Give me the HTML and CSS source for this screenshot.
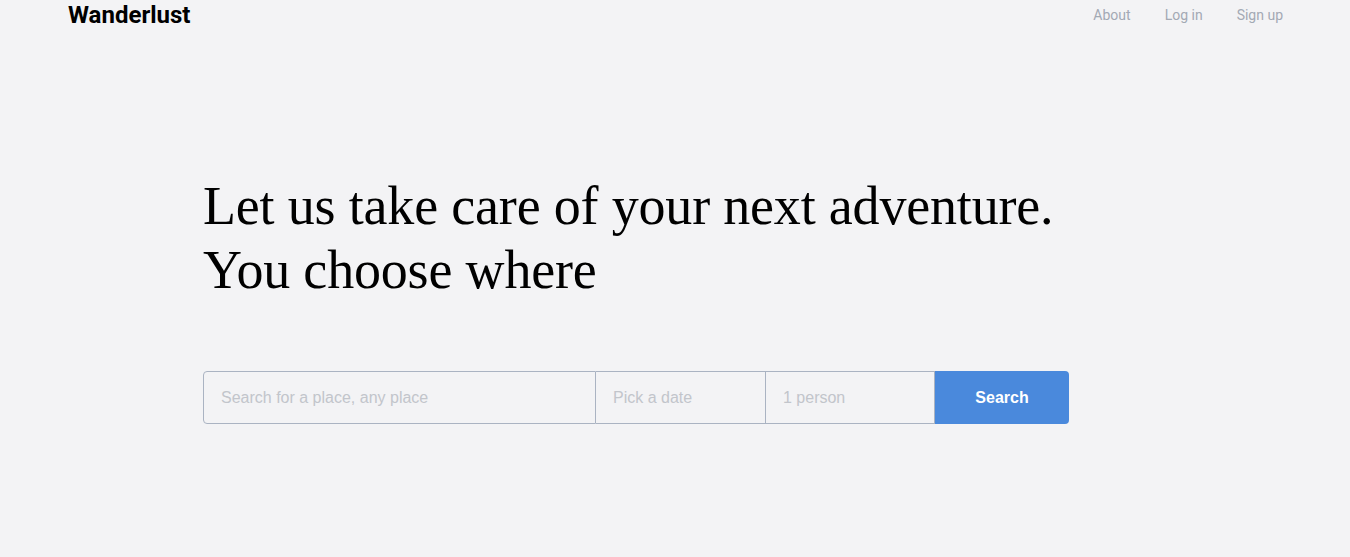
FILE: index.html
```html
<!DOCTYPE html>
<html lang="en">
<head>
<meta charset="utf-8">
<title>Wanderlust</title>
<link rel="stylesheet" href="styles.css">
</head>
<body>
<div class="page">
  <header class="topbar">
    <div class="logo">Wanderlust</div>
    <nav class="nav">
      <a href="#">About</a>
      <a href="#">Log in</a>
      <a href="#">Sign up</a>
    </nav>
  </header>
  <main class="hero">
    <h1 class="headline">Let us take care of your next adventure.<br>You choose where</h1>
    <form class="search">
      <input class="field field-place" type="text" placeholder="Search for a place, any place">
      <input class="field field-date" type="text" placeholder="Pick a date">
      <input class="field field-people" type="text" placeholder="1 person">
      <button class="btn" type="button">Search</button>
    </form>
  </main>
</div>
</body>
</html>
```
FILE: styles.css
```css
* { box-sizing: border-box; }
html, body { margin: 0; padding: 0; }
body {
  background: #f3f3f5;
  font-family: Roboto, "Liberation Sans", sans-serif;
  color: #000;
  height: 557px;
  overflow: hidden;
}
.page { padding: 0 67px 0 68px; }
.topbar {
  display: flex;
  justify-content: space-between;
  align-items: center;
  height: 30px;
}
.logo {
  font-family: Roboto, sans-serif;
  font-weight: 700;
  font-size: 24px;
  letter-spacing: 0;
  color: #000;
}
.nav { display: flex; gap: 34px; }
.nav a {
  font-size: 14px;
  color: #a3a9b4;
  text-decoration: none;
}
.hero { padding: 144px 0 0 135px; }
.headline {
  margin: 0;
  font-family: "Liberation Serif", serif;
  font-weight: 400;
  font-size: 54px;
  line-height: 64px;
  letter-spacing: -0.18px;
  color: #000;
}
.search {
  display: flex;
  margin-top: 69px;
  width: 866px;
  height: 53px;
}
.field {
  height: 53px;
  border: 1px solid #aab3c2;
  border-left: none;
  background: transparent;
  font-family: "Liberation Sans", Arial, sans-serif;
  font-size: 16px;
  padding: 0 17px;
  color: #333;
  outline: none;
}
.field::placeholder { color: #c2c5cb; }
.field-place { width: 393px; border-left: 1px solid #aab3c2; border-radius: 4px 0 0 4px; }
.field-date { width: 170px; }
.field-people { width: 169px; }
.btn {
  width: 134px;
  height: 53px;
  border: none;
  background: #4a89dc;
  color: #fff;
  font-family: "Liberation Sans", Arial, sans-serif;
  font-weight: 700;
  font-size: 16px;
  border-radius: 0 4px 4px 0;
}
```
